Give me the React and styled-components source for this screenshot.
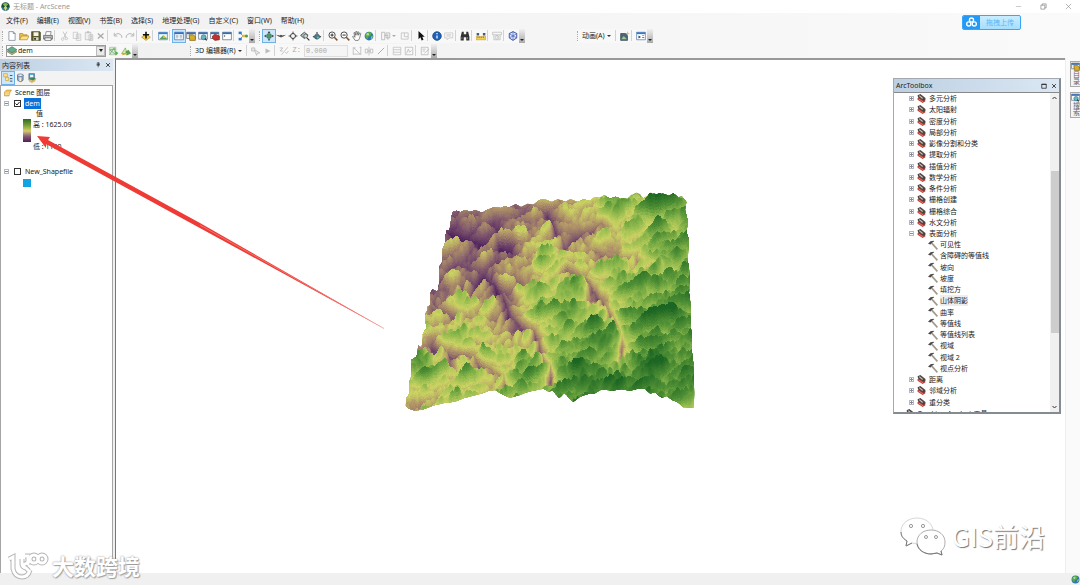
import React, { useState } from 'react';
import styled, { createGlobalStyle, css } from 'styled-components';

const GlobalStyle = createGlobalStyle`
  * {
    box-sizing: border-box;
  }

  body {
    margin: 0;
    background: #fff;
    color: #222;
    font-family: 'Noto Sans', 'Noto Sans CJK SC', sans-serif;
    font-size: 7px;
    line-height: 11px;
  }

  button,
  input,
  select {
    margin: 0;
    padding: 0;
    border: 0;
    background: none;
    color: inherit;
    font: inherit;
  }
`;

/* ---------- icons ---------- */

const shapes = {
  globe: (
    <>
      <circle cx="8" cy="8" r="7" fill="#2c77b4" />
      <path d="M3 4c3-3 7-3 9 0l-2 4-3 1-1 4C2 11 1 7 3 4z" fill="#5cad3c" />
      <path d="M11 9l3-2c0 3-1 5-3 6z" fill="#90cd56" />
      <circle cx="6" cy="5" r="2" fill="#d5efe0" opacity=".7" />
    </>
  ),
  app: (
    <>
      <circle cx="8" cy="8" r="7.5" fill="#184a3c" />
      <path d="M3 4c3-3 7-3 10 0l-3 3H6z" fill="#7cba48" />
      <path d="M8 6l3 4-2 5H7L5 10z" fill="#e2d36a" />
      <path d="M1 9l4 1 2 5c-3 0-5-2-6-6zM15 9l-4 1-2 5c3 0 5-2 6-6z" fill="#2786a8" />
    </>
  ),
  file: <path d="M3 1h7l3 3v11H3zM10 1v3h3" fill="#fff" stroke="#5a6a80" />,
  open: (
    <>
      <path d="M1 14V4h5l1 2h6v3" fill="#e9bd52" stroke="#a97d22" />
      <path d="M1 14l3-6h12l-3 6z" fill="#ffe28a" stroke="#a97d22" />
    </>
  ),
  save: (
    <>
      <path d="M1 1h13l1 1v13H1z" fill="#5c5a28" stroke="#35351a" />
      <path d="M4 2h8v6H4z" fill="#f3f3ea" />
      <path d="M4 10h8v5H4z" fill="#d8d8c8" />
      <path d="M5 11h3v3H5z" fill="#35351a" />
    </>
  ),
  print: (
    <>
      <path d="M4 6l1-5h8l-1 5" fill="#fff" stroke="#555" />
      <path d="M1 7h14v6H1z" fill="#b9bcc0" stroke="#444" />
      <path d="M3 11h10v4H3z" fill="#fff" stroke="#444" />
    </>
  ),
  cut: (
    <path d="M5 1l5 10M11 1L6 11M4 11a2 2 0 102 3 2 2 0 00-2-3zm8 0a2 2 0 10-2 3 2 2 0 002-3z" fill="none" stroke="#bdbdbd" strokeWidth="1.3" />
  ),
  copy: <path d="M2 2h7v10H2zM7 5h7v10H7zM9 8h3M9 10h3M9 12h3" fill="#f6f6f6" stroke="#bbb" />,
  paste: <path d="M2 2h9v12H2zM5 1h3v2H5zM8 6h6v9H8zM10 9h3M10 12h3" fill="#f0f0f0" stroke="#b5b5b5" />,
  remove: <path d="M3 4l9 8M12 4l-9 8" stroke="#a9a9a9" strokeWidth="2" />,
  undo: <path d="M2 3v5h5M2 8c3-5 9-5 12 0v3" fill="none" stroke="#b8b8b8" strokeWidth="1.6" />,
  redo: <path d="M14 3v5H9M14 8C11 3 5 3 2 8v3" fill="none" stroke="#b8b8b8" strokeWidth="1.6" />,
  add: (
    <>
      <path d="M8 5l7 5-7 5-7-5z" fill="#f4cf45" stroke="#b08616" />
      <path d="M8 1v11M3 6h10" stroke="#111" strokeWidth="2.600" />
    </>
  ),
  scene: (
    <>
      <path d="M1 2h14v12H1z" fill="#eef7ff" stroke="#3d6fa8" />
      <path d="M1 2h14v3H1z" fill="#3d7cc4" />
      <path d="M3 12l5-5 6 4v2H3z" fill="#5ea05a" />
      <path d="M9 6l4 5H8z" fill="#e1bb3a" />
    </>
  ),
  toc: (
    <>
      <path d="M1 2h14v12H1z" fill="#fff" stroke="#2b5f9e" />
      <path d="M1 2h14v3H1z" fill="#2c70c4" />
      <path d="M3 7h4M3 9h4M3 11h4M9 7h4M9 9h4M9 11h4" stroke="#7c93ae" />
    </>
  ),
  catalog: (
    <>
      <path d="M1 2h14v10H1z" fill="#f4f4f4" stroke="#456" />
      <path d="M1 2h14v3H1z" fill="#3a6cb0" />
      <path d="M5 6h6l4 3v6H6z" fill="#d9ad27" stroke="#6d5412" />
    </>
  ),
  search: (
    <>
      <path d="M1 2h14v11H1z" fill="#fff" stroke="#456" />
      <path d="M1 2h14v3H1z" fill="#3a6cb0" />
      <circle cx="9" cy="10" r="4" fill="#66b5bd" stroke="#246f98" />
      <path d="M11 12l3 3" stroke="#333" strokeWidth="2" />
    </>
  ),
  toolboxWindow: (
    <>
      <path d="M1 2h13v10H1z" fill="#fff" stroke="#456" />
      <path d="M1 2h13v3H1z" fill="#3a6cb0" />
      <path d="M4 8l4-3 7 3v6l-7 1-4-3z" fill="#c4302b" stroke="#73201d" />
    </>
  ),
  python: (
    <>
      <path d="M1 2h14v12H1z" fill="#fff" stroke="#456" />
      <path d="M1 2h14v3H1z" fill="#3a6cb0" />
      <path d="M3 7l2 1-2 1" fill="none" stroke="#333" />
    </>
  ),
  model: (
    <>
      <path d="M3 3l5 5-5 5M8 8h5" fill="none" stroke="#555" />
      <path d="M1 1h5v4H1z" fill="#2d78c8" />
      <path d="M1 11h5v4H1z" fill="#2d78c8" />
      <path d="M7 6h4v4H7z" fill="#e5bd35" />
      <circle cx="13.5" cy="8" r="2.5" fill="#4ba03f" />
    </>
  ),
  navigate: (
    <>
      <path d="M8 0l2 3H6zM8 16l2-3H6zM0 8l3-2v4zM16 8l-3-2v4z" fill="#333" />
      <circle cx="8" cy="8" r="4" fill="#4f9b5f" stroke="#24627a" />
    </>
  ),
  fly: <path d="M0 6l6 1 2-1 2 1 6-1-5 3H9l-1 2-1-2H5z" fill="#444" />,
  target: (
    <path d="M8 1v4M8 11v4M1 8h4M11 8h4M8 4a4 4 0 100 8 4 4 0 000-8z" fill="none" stroke="#444" strokeWidth="1.6" />
  ),
  zoomTarget: (
    <>
      <path d="M7 2l6 5-6 5-6-5z" fill="#a8bec8" stroke="#444" strokeWidth="1.4" />
      <circle cx="9" cy="8" r="3" fill="#cdd9dd" stroke="#444" />
      <path d="M11 11l4 4" stroke="#333" strokeWidth="2" />
    </>
  ),
  observer: (
    <>
      <path d="M8 1l2 3H6zM1 9l3-2v4zM15 9l-3-2v4z" fill="#333" />
      <circle cx="8" cy="9" r="4" fill="#3b83a9" stroke="#444" />
      <path d="M8 9h3v3H8z" fill="#7ec25d" />
    </>
  ),
  zoomIn: (
    <>
      <circle cx="6.5" cy="6.5" r="5" fill="#fff" stroke="#444" strokeWidth="1.5" />
      <path d="M4 6.500h5M6.500 4v5" stroke="#222" strokeWidth="1.5" />
      <path d="M10 10l5 5" stroke="#7b5433" strokeWidth="2.400" />
    </>
  ),
  zoomOut: (
    <>
      <circle cx="6.5" cy="6.5" r="5" fill="#fff" stroke="#444" strokeWidth="1.5" />
      <path d="M4 6.500h5" stroke="#222" strokeWidth="1.5" />
      <path d="M10 10l5 5" stroke="#7b5433" strokeWidth="2.400" />
    </>
  ),
  hand: (
    <path d="M5 15l-4-6 1-1 3 2-2-7 1-1 2 5V1h2v5l2-5 1 1-1 5 3-4 1 1-2 8-2 3z" fill="#fff" stroke="#444" />
  ),
  grayLayers: <path d="M1 2h5v12H1zM8 3h6v8H8zM6 7h5M11 5v9" fill="none" stroke="#b5b5b5" strokeWidth="1.3" />,
  grayBox: <path d="M2 3h11v10H2zM7 3v6h6" fill="none" stroke="#bbb" strokeWidth="1.2" />,
  pointer: <path d="M4 0v13l3-3 2 5 3-1-2-5h4z" fill="#111" />,
  info: (
    <>
      <circle cx="8" cy="8" r="7" fill="#1f62b8" stroke="#173e75" />
      <path d="M8 7v5M8 3v2" stroke="#fff" strokeWidth="2" />
    </>
  ),
  popup: <path d="M1 3h13v8H8l-3 3v-3H1zM4 6h7M4 8h7" fill="#f7f7f7" stroke="#bbb" />,
  find: (
    <>
      <path d="M3 1h3v4h4V1h3l2 8v6h-5v-5H6v5H1V9z" fill="#333" />
      <path d="M3 10v3M12 10v3" stroke="#aaa" />
    </>
  ),
  measure: (
    <>
      <path d="M0 9h16v5H0z" fill="#f2ce4e" stroke="#c59a3b" />
      <path d="M3 9v2M6 9v2M9 9v2M12 9v2" stroke="#6e5312" />
      <path d="M1 3h4v4H1zM11 3h4v4h-4z" fill="#3c5f80" />
    </>
  ),
  clock: <path d="M1 2h14v4H1zM3 6v8h10V6M8 7a3 3 0 100 6 3 3 0 000-6zM8 8v2h2" fill="none" stroke="#bbb" strokeWidth="1.2" />,
  cube: (
    <>
      <path d="M8 1l6 3v7l-6 4-6-4V4z" fill="#dfe7fb" stroke="#3551a8" strokeWidth="1.5" />
      <path d="M2 4l6 4 6-4M8 1v14M2 11l6-3 6 3" fill="none" stroke="#3551a8" />
    </>
  ),
  layer: (
    <>
      <path d="M8 5l8 4-8 5-8-5z" fill="#b9b06a" stroke="#6a7a62" />
      <path d="M8 1l8 5-8 5-8-5z" fill="#5fae8c" stroke="#45706a" />
    </>
  ),
  tin: (
    <>
      <path d="M1 2h10v12H1z" fill="#d8ecd2" stroke="#9cb698" />
      <path d="M1 14L8 3l3 11L1 6l10-1" fill="none" stroke="#58a058" />
      <path d="M10 8l5 3-4 4z" fill="#5bae4e" />
    </>
  ),
  surface: (
    <>
      <path d="M1 12l6-9 3 9z" fill="#d6e9a6" stroke="#6f9d3b" />
      <path d="M7 9l5-3 4 6-7 3z" fill="#54a04a" />
      <path d="M2 14l8-2" stroke="#d6a730" strokeWidth="2" />
    </>
  ),
  vertex: <path d="M1 3h5v5H1zM6 6l8 5-4 1-1 3-3-7" fill="#e9e9e9" stroke="#aaa" />,
  play: <path d="M4 4l8 4-8 4z" fill="#bbb" />,
  zline: <path d="M1 3h5L2 8h4M4 14L14 2M10 10l2 2 3-4" fill="none" stroke="#aaa" />,
  mesh: <path d="M2 3h4M2 2v12M2 13h12M14 2v12M3 3l10 10M12 2h3" fill="none" stroke="#aaa" />,
  mirror: <path d="M8 1v14M2 5h4v6H2zM10 5h4v6h-4zM6 8h4" fill="none" stroke="#aaa" />,
  line: <path d="M3 13L13 3" stroke="#aaa" strokeWidth="1.5" />,
  grid: <path d="M2 2h12v12H2zM2 6h12M2 10h12" fill="none" stroke="#b5b5b5" />,
  curve: <path d="M2 2h12v12H2zM4 12l3-7 2 5 3-3" fill="none" stroke="#aaa" />,
  edit: <path d="M2 2h11v12H2zM4 5h5M4 8h4M7 12l7-7" fill="none" stroke="#aaa" />,
  movie: (
    <>
      <path d="M1 4h11v11H1z" fill="#4c6678" stroke="#263946" />
      <path d="M2 13l4-5 5 5z" fill="#9ccb87" />
      <path d="M12 0l1 3 3 1-3 1-1 3-1-3-3-1 3-1z" fill="#f0c23c" />
    </>
  ),
  keyframe: (
    <>
      <path d="M1 2h14v12H1z" fill="#fff" stroke="#3869a8" />
      <path d="M1 2h14v3H1z" fill="#3a78c4" />
      <path d="M4 7v5l4-2.500zM10 7h3v1h-3zM10 10h3v1h-3z" fill="#345" />
    </>
  ),
  listOrder: (
    <>
      <path d="M1 1h6v5H1zM4 7h5v5H4z" fill="#ffe394" stroke="#c79a3a" />
      <path d="M11 4h4M11 9h4M11 13h4" stroke="#356" strokeWidth="1.5" />
    </>
  ),
  listSource: (
    <>
      <path d="M4 11l5 4 5-4-5-2z" fill="#e3bd4b" />
      <path d="M4 3v8c0 3 9 3 9 0V3z" fill="#8ea9cc" stroke="#44597a" />
      <ellipse cx="8.5" cy="3.500" rx="4.500" ry="2" fill="#f1f4f8" stroke="#44597a" />
      <path d="M7 7h3v6H7z" fill="#f4f0d0" />
    </>
  ),
  listVisible: (
    <>
      <path d="M3 1h9v10H3z" fill="#4f9fc0" stroke="#3f6b95" />
      <path d="M5 3h5v4H5z" fill="#f3f7fb" />
      <path d="M1 8l5 4 9-4-2 5-5 3-4-2z" fill="#d9b765" />
      <path d="M4 8l5 4 5-3-4-2z" fill="#39845c" />
    </>
  ),
  sceneLayers: (
    <>
      <path d="M1 6l4-4h10l-3 5-2 7H1z" fill="#f2c55c" stroke="#b3822a" />
      <path d="M2 8h9M2 11h9" stroke="#fff1c0" />
    </>
  ),
  toolset: (
    <>
      <path d="M1 7l4-1 9 4 1 3-5 3-9-6z" fill="#c23a31" />
      <path d="M1 2l5-2 9 7v4l-4 1-9-6z" fill="#4d4542" />
      <path d="M4 3l6 5" stroke="#cfc4bd" strokeWidth="2" />
      <path d="M3 9l8 5" stroke="#e8a79e" strokeWidth="1" />
    </>
  ),
  hammer: (
    <>
      <path d="M6 5l9 10" stroke="#a29a8b" strokeWidth="2.600" />
      <path d="M0 6l4-4 5-1 1 1-3 2-3 3z" fill="#4b4b4b" />
    </>
  ),
  pin: <path d="M6 2h5v6H6zM4 8h9M8.500 8v6M9.500 2v6" fill="none" stroke="#222" strokeWidth="1.6" />,
  close: <path d="M3 3l10 10M13 3L3 13" stroke="#222" strokeWidth="2.200" />,
  thinClose: <path d="M2 2l12 12M14 2L2 14" stroke="#777" strokeWidth="1.2" />,
  minimize: <path d="M2 8h12" stroke="#aaa" strokeWidth="1.4" />,
  restore: <path d="M2 5h9v9H2zM5 5V2h9v9h-3" fill="none" stroke="#777" strokeWidth="1.4" />,
  maximize: <path d="M2 3h12v11H2zM2 4h12" fill="none" stroke="#222" strokeWidth="2" />,
  cloud: (
    <g fill="none" stroke="#fff" strokeWidth="2">
      <circle cx="8" cy="4.500" r="3" />
      <circle cx="4" cy="10" r="3" />
      <circle cx="12" cy="10" r="3" />
    </g>
  ),
};

const Icon = ({ name, size = 10 }) => (
  <svg width={size} height={size} viewBox="0 0 16 16" aria-hidden="true">
    {shapes[name]}
  </svg>
);

/* ---------- frame ---------- */

const Frame = styled.div`
  position: relative;
  display: flex;
  flex-direction: column;
  min-height: 100vh;
  overflow: hidden;
`;

const TitleBar = styled.header`
  display: flex;
  align-items: center;
  gap: 3px;
  height: 13px;
  padding: 0 8px 0 1px;
  color: #999;
`;

const WindowButtons = styled.div`
  display: flex;
  gap: 18px;
  margin-left: auto;
`;

const PlainButton = styled.button`
  display: flex;
  align-items: center;
  justify-content: center;
`;

const Chrome = styled.div`
  height: 45px;
  background: linear-gradient(90deg, #f0f0f0, #f5f5f5 50%, #fafafa);
`;

const MenuBar = styled.nav`
  display: flex;
  gap: 9px;
  height: 15px;
  padding: 2px 6px;
`;

const ToolRow = styled.div`
  display: flex;
  align-items: center;
  height: 15px;
  padding-left: 2px;
`;

const ToolGroup = styled.div`
  display: flex;
  align-items: center;
  height: 14px;
  margin-right: ${({ $after = 4 }) => $after}px;
  background: #f8f8f8;
`;

const Grip = styled.i`
  width: 4px;
  height: 10px;
  border-left: 1px dotted #aaa;
`;

const Divider = styled.i`
  width: ${({ $narrow }) => ($narrow ? 4 : 5)}px;
  height: 11px;
  border-left: 1px solid #d2d2d2;
`;

const ToolButton = styled.button`
  display: flex;
  align-items: center;
  justify-content: center;
  width: 12px;
  height: 12px;
  ${({ $active }) =>
    $active &&
    css`
      background: #cde6f9;
      outline: 1px solid #6fb1e4;
    `}
`;

const TextButton = styled.button`
  display: flex;
  align-items: center;
  gap: 2px;
  padding: 0 4px 0 1px;
  white-space: nowrap;

  &::after {
    content: '';
    border: 2px solid transparent;
    border-top-color: #333;
    border-bottom: 0;
  }
`;

const Caret = styled.button`
  display: flex;
  align-items: center;
  width: 7px;
  height: 12px;

  &::after {
    content: '';
    border: 2px solid transparent;
    border-top-color: #aaa;
    border-bottom: 0;
  }
`;

const Overflow = styled.button`
  align-self: stretch;
  width: 6px;
  background: linear-gradient(#f0f0f0, #a9a9a9);

  &::after {
    content: '';
    display: block;
    width: 0;
    margin: 8px 1px 0;
    border: 2px solid transparent;
    border-top-color: #222;
    border-bottom: 0;
  }
`;

const LayerPicker = styled.label`
  display: flex;
  align-items: center;
  width: 100px;
  height: 12px;
  margin-right: 2px;
  border: 1px solid #999;
  background: #fff;

  select {
    flex: 1;
    height: 10px;
    padding-left: 1px;
    appearance: none;
    line-height: 10px;
    background: #fff;
  }
`;

const PickerArrow = styled.i`
  display: flex;
  align-items: center;
  justify-content: center;
  width: 9px;
  height: 10px;
  background: #e9e9e9;
  border: 1px solid #bbb;

  &::after {
    content: '';
    border: 2px solid transparent;
    border-top: 3px solid #222;
    border-bottom: 0;
  }
`;

const HeightField = styled.label`
  display: flex;
  align-items: center;
  gap: 3px;
  padding: 0 3px;
  color: #aaa;
  font-family: 'Liberation Mono', monospace;

  input {
    width: 44px;
    height: 12px;
    padding-left: 1px;
    border: 1px solid #ddd;
    background: #f5f5f5;
  }
`;

const UploadButton = styled.button`
  position: absolute;
  top: 15px;
  right: 59px;
  display: flex;
  align-items: center;
  width: 59px;
  height: 15px;
  overflow: hidden;
  border: 1px solid #39a5f7;
  border-radius: 2px;
  background: linear-gradient(#c9edff, #a4deff);
  color: #5bb5f4;

  svg {
    width: 17px;
    height: 15px;
    padding: 2px;
    background: #2499f5;
  }

  span {
    flex: 1;
  }
`;

const Workspace = styled.div`
  flex: 1;
  display: flex;
  min-height: 0;
  background: #f0f0f0;
`;

const Contents = styled.aside`
  display: flex;
  flex-direction: column;
  width: 113px;
  padding-top: 1px;
`;

const PanelHeader = styled.div`
  display: flex;
  align-items: center;
  gap: 4px;
  height: 12px;
  padding: 0 2px;
  background: linear-gradient(90deg, #bdd0e3, #dbe7f3);

  h2 {
    flex: 1;
    margin: 0;
    font-size: inherit;
    font-weight: 400;
  }
`;

const PanelTools = styled.div`
  display: flex;
  align-items: center;
  height: 14px;
  padding-left: 2px;
  background: #f3f3f3;
`;

const Layers = styled.div`
  flex: 1;
  padding: 1px 3px;
  border: 1px solid #a5a5a5;
  border-width: 1px 1px 0;
  background: #fff;
`;

const LayerRow = styled.div`
  display: flex;
  align-items: center;
  gap: 4px;
  height: 11px;

  & > svg {
    margin-right: -1px;
  }
`;

const Expander = styled.button`
  width: 5px;
  height: 5px;
  border: 1px solid #b3b9c2;
  background:
    linear-gradient(#889, #889) center / 3px 1px no-repeat,
    ${({ $open }) => ($open ? 'linear-gradient(#fff, #fff)' : 'linear-gradient(#889, #889) center / 1px 3px no-repeat')};
`;

const LayerToggle = styled.label`
  display: flex;
  align-items: center;
  gap: 3px;
  margin-left: 1px;

  i {
    position: relative;
    display: flex;
  }

  i svg {
    position: absolute;
    inset: 0;
    pointer-events: none;
  }

  input {
    width: 7px;
    height: 7px;
    appearance: none;
    border: 1px solid #333;
    background: #fff;
  }

  span {
    padding: 0 1px;
    ${({ $selected }) => $selected && 'background: #0a72d8; color: #fff;'}
  }
`;

const Legend = styled.div`
  display: grid;
  grid-template-columns: 8px auto;
  column-gap: 2px;
  width: max-content;
  margin: 0 0 14px 19px;

  b {
    grid-column: 2;
    padding-left: 3px;
    font-weight: 400;
    line-height: 10px;
  }

  i {
    grid-row: 2 / 4;
    grid-column: 1;
    height: 23px;
    background: linear-gradient(#286a25, #83a33b 30%, #d5cd6b 52%, #8a5a75 75%, #4c2058);
  }

  span:last-child {
    padding-top: 11px;
  }
`;

const Swatch = styled.div`
  width: 8px;
  height: 8px;
  margin: 2px 0 0 19px;
  background: #12a3e2;
`;

const SceneView = styled.main`
  position: relative;
  flex: 1;
  margin-left: 2px;
  border-top: 2px solid #999;
  border-left: 1px solid #777;
  background: #fff;
`;

const Relief = styled.svg`
  position: absolute;
  top: 120px;
  left: 279px;
`;

const Rail = styled.div`
  display: flex;
  flex-direction: column;
  align-items: flex-end;
  gap: 5px;
  width: 15px;
  padding-top: 3px;
  background: #fafafa;
  border-left: 1px solid #eee;
`;

const RailTab = styled.button`
  display: flex;
  flex-direction: column;
  align-items: center;
  width: 10px;
  height: 26px;
  border: 1px solid #aaa;
  border-right: 0;
  background: #f4f4f4;
  color: #666;
  line-height: 8px;

  span {
    writing-mode: vertical-rl;
  }
`;

const StatusBar = styled.footer`
  display: flex;
  align-items: center;
  justify-content: flex-end;
  height: 12px;
  background: #f0f0f0;
`;

const Toolbox = styled.section`
  position: absolute;
  top: 78px;
  right: 19px;
  display: flex;
  flex-direction: column;
  width: 168px;
  height: 336px;
  border: 1px solid #a3a9b0;
  border-right: 2px solid #858b93;
  border-bottom: 2px solid #858b93;
  background: #fff;

  ${PanelHeader} {
    height: 13px;
  }
`;

const ToolboxBody = styled.div`
  flex: 1;
  display: flex;
  min-height: 0;
  border-top: 1px solid #888;
`;

const TreeClip = styled.div`
  flex: 1;
  overflow: hidden;
`;

const Tree = styled.ul`
  display: grid;
  grid-auto-rows: 1fr;
  height: 326px;
  margin: 0;
  padding: 0;
  list-style: none;
`;

const TreeItem = styled.li`
  display: flex;
  align-items: center;
  gap: ${({ $level }) => ($level === 2 ? 2 : 3)}px;
  padding-left: ${({ $level }) => [12, 15, 34][$level]}px;
  white-space: nowrap;

  span {
    ${({ $selected }) => $selected && 'background: #eee;'}
  }
`;

const ScrollTrack = styled.div`
  display: flex;
  flex-direction: column;
  align-items: center;
  justify-content: space-between;
  width: 9px;
  background: linear-gradient(#cdcdcd, #cdcdcd) center 78px / 8px 162px no-repeat, #f0f0f0;

  button {
    width: 9px;
    height: 10px;
  }

  svg {
    display: block;
    margin: auto;
  }
`;

const Annotation = styled.svg`
  position: absolute;
  top: 130px;
  left: 30px;
  pointer-events: none;
`;

const Watermark = styled.div`
  position: absolute;
  display: flex;
  align-items: center;
  gap: ${({ $gap }) => $gap}px;
  color: #fff;
  white-space: nowrap;
  pointer-events: none;
`;

const ChannelMark = styled(Watermark)`
  right: 35px;
  bottom: 29px;
  font-family: 'Noto Sans CJK SC', sans-serif;
  font-size: 26px;
  line-height: 38px;
  text-shadow: 1px 1px 1px #777;
`;

const SiteMark = styled(Watermark)`
  left: 8px;
  bottom: 4px;
  font-size: 22px;
  font-weight: 700;
  line-height: 30px;
  text-shadow: 0 0 2px #888, 1px 1px 1px #aaa;
`;

/* ---------- relief model ---------- */

// x, y, relative elevation
const samples = [
  [200, 110, 0.28], [300, 140, 0.22], [400, 100, 0.38], [470, 110, 0.44], [560, 90, 0.58],
  [540, 160, 0.44], [650, 70, 0.68], [720, 60, 0.72], [850, 60, 0.84], [800, 130, 0.8],
  [700, 120, 0.67], [640, 170, 0.58], [160, 160, 0.24], [240, 180, 0.28], [330, 190, 0.2],
  [180, 230, 0.3], [280, 270, 0.24], [210, 270, 0.28], [140, 310, 0.24], [340, 230, 0.28],
  [400, 205, 0.55], [450, 180, 0.7], [510, 190, 0.58], [600, 220, 0.62], [690, 240, 0.7],
  [850, 200, 0.83], [800, 240, 0.74], [450, 230, 0.7], [520, 262, 0.6], [390, 260, 0.42],
  [460, 300, 0.74], [300, 325, 0.3], [330, 380, 0.38], [240, 340, 0.65], [180, 330, 0.58],
  [130, 370, 0.5], [200, 380, 0.64], [400, 340, 0.64], [570, 300, 0.6], [610, 340, 0.62],
  [700, 300, 0.87], [850, 300, 0.92], [600, 265, 0.66], [655, 400, 0.7], [430, 460, 0.54],
  [370, 425, 0.5], [430, 380, 0.75], [520, 400, 0.86], [600, 420, 0.87], [740, 400, 0.92],
  [860, 400, 0.94], [120, 420, 0.55], [110, 475, 0.44], [200, 450, 0.66], [280, 440, 0.7],
  [340, 450, 0.6], [150, 520, 0.46], [250, 520, 0.56], [390, 500, 0.82], [500, 500, 0.92],
  [600, 500, 0.96], [680, 490, 0.78], [780, 480, 0.96], [860, 500, 0.96], [90, 560, 0.8],
  [180, 570, 0.7], [275, 560, 0.58], [380, 570, 0.88], [460, 550, 0.76], [560, 570, 0.98],
  [640, 590, 1.04], [740, 560, 1.02], [850, 570, 1.02], [60, 650, 0.5], [150, 630, 0.6],
  [240, 610, 0.7], [325, 600, 0.62], [340, 645, 0.74], [480, 620, 0.98], [600, 620, 1.04],
  [720, 620, 1.06], [880, 660, 0.8],
];

// depth, then the points of the stream
const streams = [
  [0.4, [240, 325], [262, 292], [300, 325], [325, 360], [340, 400], [375, 435], [412, 450], [430, 485]],
  [0.4, [515, 262], [560, 292], [590, 318], [622, 360], [655, 415], [680, 465], [678, 515]],
  [0.42, [430, 485], [440, 525], [465, 560], [468, 595]],
  [0.22, [165, 150], [230, 172], [285, 188], [340, 208]],
  [0.2, [320, 205], [300, 260], [285, 300]],
  [0.3, [110, 495], [150, 520], [215, 520], [270, 560], [325, 590], [328, 620]],
  [0.28, [455, 90], [480, 140], [510, 188]],
  [0.24, [510, 188], [560, 150], [620, 120]],
  [0.28, [600, 205], [640, 218], [720, 226], [800, 256]],
  [0.2, [110, 375], [150, 385], [215, 400]],
];

const ramp = [
  [0, [80, 36, 94]],
  [0.2, [122, 80, 108]],
  [0.42, [176, 148, 104]],
  [0.58, [202, 210, 98]],
  [0.75, [138, 182, 74]],
  [0.9, [78, 142, 52]],
  [1.15, [26, 100, 34]],
];

const colorAt = (value) => {
  const v = Math.max(0, Math.min(1.14, value));
  const i = ramp.findIndex(([stop]) => stop > v);
  const [a, from] = ramp[i - 1];
  const [b, to] = ramp[i];
  const t = (v - a) / (b - a);
  return `rgb(${from.map((c, k) => Math.round(c + (to[k] - c) * t)).join(',')})`;
};

const regional = (x, y) => {
  let total = 0;
  let weight = 0;
  samples.forEach(([sx, sy, value]) => {
    const d = (x - sx) ** 2 + (y - sy) ** 2 + 500;
    const w = 1 / (d * Math.sqrt(d));
    total += value * w;
    weight += w;
  });
  return total / weight;
};

const segmentDistance = (x, y, [ax, ay], [bx, by]) => {
  const dx = bx - ax;
  const dy = by - ay;
  const t = Math.max(0, Math.min(1, ((x - ax) * dx + (y - ay) * dy) / (dx * dx + dy * dy)));
  return (x - ax - t * dx) ** 2 + (y - ay - t * dy) ** 2;
};

const carve = (x, y) => {
  let depth = 0;
  streams.forEach(([amount, ...points]) => {
    let nearest = Infinity;
    for (let i = 1; i < points.length; i += 1) {
      nearest = Math.min(nearest, segmentDistance(x, y, points[i - 1], points[i]));
    }
    depth = Math.max(depth, amount * Math.exp(-Math.sqrt(nearest) / 13));
  });
  return depth;
};

const hash = (x, y) => {
  const s = Math.sin(x * 127.1 + y * 311.7) * 43758.5453;
  return (s - Math.floor(s)) * Math.PI * 2;
};

const fade = (t) => t * t * t * (t * (t * 6 - 15) + 10);

const gradientNoise = (x, y) => {
  const ix = Math.floor(x);
  const iy = Math.floor(y);
  const fx = x - ix;
  const fy = y - iy;
  const corner = (cx, cy) => {
    const a = hash(ix + cx, iy + cy);
    return Math.cos(a) * (fx - cx) + Math.sin(a) * (fy - cy);
  };
  const u = fade(fx);
  const top = corner(0, 0) + (corner(1, 0) - corner(0, 0)) * u;
  const bottom = corner(0, 1) + (corner(1, 1) - corner(0, 1)) * u;
  return top + (bottom - top) * fade(fy);
};

const hills = (x, y) => {
  const slant = y + x * 0.3;
  let total = 0;
  total += Math.abs(gradientNoise(x / 120 + 3, slant / 42)) * 1.1;
  total += Math.abs(gradientNoise(x / 58 + 11, slant / 30 + 7)) * 0.75;
  total += Math.abs(gradientNoise(x / 25 + 5, y / 26 + 13)) * 0.4;
  total += Math.abs(gradientNoise(x / 12 + 9, y / 20 + 3)) * 0.14;
  return total;
};

const cellWidth = 3;
const rowStep = 2;

// Rows run from the far edge to the near edge, so nearer slopes cover the ones behind.
const buildSurface = () => {
  const rows = [];
  for (let y = 36; y < 730; y += rowStep) {
    const strips = new Map();
    for (let x = 30; x < 900; x += cellWidth) {
      const cut = carve(x, y);
      const h = hills(x, y);
      const value = regional(x, y - 6) + (h - 0.48) * 0.55 - cut;
      const level = Math.round(value * 50);
      const top = Math.round(y - (h - 0.48) * 66 + cut * 26);
      const strip = `M${x} ${top}h${cellWidth}v24h-${cellWidth}z`;
      strips.set(level, (strips.get(level) || '') + strip);
    }
    rows.push({ y, strips: [...strips] });
  }
  return rows;
};

const surface = buildSurface();

const outline =
  'M172 97L185 92 196 97 210 91 228 95 240 90 262 98 275 90 298 82 318 84 332 78 340 84 362 73 378 82 398 71 415 75 430 62 440 57 455 60 470 66 490 58 512 65 526 57 548 66 566 58 585 63 598 51 615 53 628 46 645 56 662 50 680 56 698 57 710 44 724 37 736 42 744 55 756 48 766 37 784 43 800 39 822 47 835 40 850 52 861 48 874 66 870 90 878 120 875 160 882 178 878 240 884 280 882 340 888 380 886 430 891 470 890 510 895 550 896 600 898 640 896 683 864 682 850 668 832 660 815 648 800 653 782 638 765 640 750 627 728 626 705 632 680 628 650 632 620 628 600 640 575 643 555 650 535 665 522 655 515 645 508 640 492 655 480 640 472 630 462 635 445 626 425 630 400 635 375 645 345 653 320 642 300 630 282 632 258 641 230 648 205 655 180 665 150 668 118 676 85 688 60 692 42 686 32 678 34 655 44 640 42 610 48 590 48 540 65 530 70 496 80 504 84 460 94 445 90 402 98 390 98 380 106 376 106 340 112 328 128 336 134 300 132 260 142 245 142 210 150 190 154 150 163 153Z';

const Terrain = () => (
  <Relief width="310" height="240" viewBox="0 0 930 720" role="img" aria-label="dem">
    <defs>
      <clipPath id="extent">
        <path d={outline} />
      </clipPath>
      <linearGradient id="base">
        <stop offset="0" stopColor="#7a4f66" />
        <stop offset=".4" stopColor="#a08a60" />
        <stop offset=".65" stopColor="#b4bd58" />
        <stop offset="1" stopColor="#6a9c3e" />
      </linearGradient>
    </defs>
    <g clipPath="url(#extent)">
      <path d={outline} fill="url(#base)" />
      {surface.map(({ y, strips }) => (
        <g key={y} shapeRendering="crispEdges">
          {strips.map(([level, d]) => (
            <path key={level} d={d} fill={colorAt(level / 50)} />
          ))}
        </g>
      ))}
    </g>
  </Relief>
);

/* ---------- data ---------- */

const menus = ['文件(F)', '编辑(E)', '视图(V)', '书签(B)', '选择(S)', '地理处理(G)', '自定义(C)', '窗口(W)', '帮助(H)'];

const standardTools = [
  'file', 'open', 'save', 'print', '|', 'cut', 'copy', 'paste', 'remove', '|', 'undo', 'redo', '.',
  'add', '|', 'scene', '.', 'toc', 'catalog', 'search', 'toolboxWindow', 'python', '.', 'model',
];

const sceneTools = [
  'navigate', 'fly', 'target', 'zoomTarget', 'observer', '.', 'zoomIn', 'zoomOut', 'hand', 'globe',
  '|', 'grayLayers', 'v', 'grayBox', '.', 'pointer', '.', 'info', 'popup', '.', 'find', '.',
  'measure', '.', 'clock', '.', 'cube',
];

const toolsets = [
  '多元分析', '太阳辐射', '密度分析', '局部分析', '影像分割和分类', '提取分析', '插值分析',
  '数学分析', '条件分析', '栅格创建', '栅格综合', '水文分析', '表面分析',
];

const surfaceTools = [
  '可见性', '含障碍的等值线', '坡向', '坡度', '填挖方', '山体阴影', '曲率', '等值线',
  '等值线列表', '视域', '视域 2', '视点分析',
];

const Tools = ({ items }) =>
  items.map((name, i) => {
    const key = `${name}-${i}`;
    if (name === '|' || name === '.') return <Divider key={key} $narrow={name === '.'} />;
    if (name === 'v') return <Caret key={key} type="button" aria-label="more" />;
    return (
      <ToolButton key={key} type="button" aria-label={name} $active={name === 'toc' || name === 'navigate'}>
        <Icon name={name} />
      </ToolButton>
    );
  });

const ToolsetItem = ({ name, open }) => (
  <TreeItem $level={1}>
    <Expander type="button" aria-label={name} $open={open} />
    <Icon name="toolset" size={9} />
    <span>{name}</span>
  </TreeItem>
);

const LayerItem = ({ name, checked, selected, onToggle }) => (
  <LayerRow>
    <Expander type="button" aria-label={name} $open />
    <LayerToggle $selected={selected}>
      <i>
        <input type="checkbox" checked={checked} onChange={onToggle} />
        {checked && (
          <svg width="7" height="7" viewBox="0 0 7 7">
            <path d="M1.500 3.500l1.500 1.500 2.500-3" fill="none" stroke="#222" />
          </svg>
        )}
      </i>
      <span>{name}</span>
    </LayerToggle>
  </LayerRow>
);

const App = () => {
  const [visible, setVisible] = useState({ dem: true, shape: false });

  const toggle = (layer) => setVisible({ ...visible, [layer]: !visible[layer] });

  return (
    <Frame>
      <GlobalStyle />
      <TitleBar>
        <Icon name="app" size={9} />
        <span>无标题 - ArcScene</span>
        <WindowButtons>
          <PlainButton type="button" aria-label="minimize"><Icon name="minimize" size={7} /></PlainButton>
          <PlainButton type="button" aria-label="restore"><Icon name="restore" size={7} /></PlainButton>
          <PlainButton type="button" aria-label="close"><Icon name="thinClose" size={7} /></PlainButton>
        </WindowButtons>
      </TitleBar>

      <Chrome>
        <MenuBar>
          {menus.map((menu) => (
            <PlainButton key={menu} type="button">{menu}</PlainButton>
          ))}
        </MenuBar>
        <ToolRow>
          <ToolGroup>
            <Grip />
            <Tools items={standardTools} />
            <Overflow type="button" aria-label="options" />
          </ToolGroup>
          <ToolGroup $after={52}>
            <Grip />
            <Tools items={sceneTools} />
            <Overflow type="button" aria-label="options" />
          </ToolGroup>
          <ToolGroup>
            <Grip />
            <TextButton type="button">动画(A)</TextButton>
            <Tools items={['.', 'movie', '.', 'keyframe']} />
            <Overflow type="button" aria-label="options" />
          </ToolGroup>
        </ToolRow>
        <ToolRow>
          <ToolGroup $after={52}>
            <Grip />
            <LayerPicker>
              <Icon name="layer" />
              <select aria-label="layer" defaultValue="dem">
                <option>dem</option>
              </select>
              <PickerArrow />
            </LayerPicker>
            <Tools items={['tin', 'surface']} />
            <Overflow type="button" aria-label="options" />
          </ToolGroup>
          <ToolGroup>
            <Grip />
            <TextButton type="button">3D 编辑器(R)</TextButton>
            <Tools items={['.', 'vertex', 'play', '.', 'zline']} />
            <HeightField>
              Z:
              <input type="text" defaultValue="0.000" />
            </HeightField>
            <Tools items={['mesh', 'mirror', 'line', '.', 'grid', 'curve', '.', 'edit']} />
            <Overflow type="button" aria-label="options" />
          </ToolGroup>
        </ToolRow>
      </Chrome>

      <UploadButton type="button">
        <Icon name="cloud" size={16} />
        <span>拖拽上传</span>
      </UploadButton>

      <Workspace>
        <Contents>
          <PanelHeader>
            <h2>内容列表</h2>
            <PlainButton type="button" aria-label="pin"><Icon name="pin" size={6} /></PlainButton>
            <PlainButton type="button" aria-label="close"><Icon name="close" size={6} /></PlainButton>
          </PanelHeader>
          <PanelTools>
            <ToolButton type="button" aria-label="order" $active><Icon name="listOrder" /></ToolButton>
            <ToolButton type="button" aria-label="source"><Icon name="listSource" /></ToolButton>
            <ToolButton type="button" aria-label="visibility"><Icon name="listVisible" /></ToolButton>
          </PanelTools>
          <Layers>
            <LayerRow>
              <Icon name="sceneLayers" size={8} />
              <span>Scene 图层</span>
            </LayerRow>
            <LayerItem name="dem" checked={visible.dem} selected onToggle={() => toggle('dem')} />
            <Legend>
              <b>值</b>
              <i />
              <span>高 : 1625.09</span>
              <span>低 : 1100</span>
            </Legend>
            <LayerItem name="New_Shapefile" checked={visible.shape} onToggle={() => toggle('shape')} />
            <Swatch />
          </Layers>
        </Contents>
        <SceneView>
          <Terrain />
        </SceneView>
        <Rail>
          <RailTab type="button"><Icon name="catalog" size={9} /><span>目录</span></RailTab>
          <RailTab type="button"><Icon name="search" size={9} /><span>搜索</span></RailTab>
        </Rail>
      </Workspace>

      <StatusBar>
        <Icon name="globe" size={9} />
      </StatusBar>

      <Toolbox>
        <PanelHeader>
          <h2>ArcToolbox</h2>
          <PlainButton type="button" aria-label="maximize"><Icon name="maximize" size={6} /></PlainButton>
          <PlainButton type="button" aria-label="close"><Icon name="close" size={6} /></PlainButton>
        </PanelHeader>
        <ToolboxBody>
          <TreeClip>
            <Tree>
              {toolsets.map((name) => (
                <ToolsetItem key={name} name={name} open={name === '表面分析'} />
              ))}
              {surfaceTools.map((name) => (
                <TreeItem key={name} $level={2} $selected={name === '山体阴影'}>
                  <Icon name="hammer" size={10} />
                  <span>{name}</span>
                </TreeItem>
              ))}
              {['距离', '邻域分析', '重分类'].map((name) => (
                <ToolsetItem key={name} name={name} />
              ))}
              <TreeItem $level={0}>
                <Icon name="toolset" size={9} />
                <span>Tracking Analyst 工具</span>
              </TreeItem>
            </Tree>
          </TreeClip>
          <ScrollTrack>
            <button type="button" aria-label="up">
              <svg width="5" height="4" viewBox="0 0 10 8"><path d="M1 6l4-4 4 4" fill="none" stroke="#333" strokeWidth="2" /></svg>
            </button>
            <button type="button" aria-label="down">
              <svg width="5" height="4" viewBox="0 0 10 8"><path d="M1 2l4 4 4-4" fill="none" stroke="#333" strokeWidth="2" /></svg>
            </button>
          </ScrollTrack>
        </ToolboxBody>
      </Toolbox>

      <Annotation width="360" height="205" viewBox="30 130 360 205" aria-hidden="true">
        <path d="M37 136L50 137 48 140 200 223 384 328.500 198 227 46 144 46 148Z" fill="#ee3b35" />
        <path d="M200 225L384 328.500" stroke="#f08a86" strokeWidth=".7" />
      </Annotation>

      <ChannelMark $gap={6}>
        <svg width="46" height="40" viewBox="0 0 46 40" aria-hidden="true">
          <g fill="#fff">
            <path d="M17 2C8 2 1 8 1 15c0 5 3 8 6 10l-1 5 6-3c14 3 21-5 21-12C33 8 26 2 17 2z" stroke="#ccc" strokeWidth=".8" />
            <path d="M31 14c-8 0-14 5-14 12s7 12 14 12l6-1 5 2-1-4c3-2 4-5 4-9 0-7-6-12-14-12z" stroke="#999" strokeWidth=".8" />
            <path d="M1 16c0 5 3 7 6 9l-1 5 6-3M17 28c1 6 7 10 14 10l6-1 5 2-1-4" fill="none" stroke="#777" />
            <circle cx="11" cy="10" r="1.600" stroke="#999" />
            <circle cx="23" cy="10" r="1.600" stroke="#999" />
            <circle cx="26" cy="21" r="1.500" stroke="#999" />
            <circle cx="36" cy="21" r="1.500" stroke="#999" />
          </g>
        </svg>
        <span>GIS前沿</span>
      </ChannelMark>

      <SiteMark $gap={3}>
        <svg width="41" height="30" viewBox="0 0 41 30" aria-hidden="true">
          {['#b5b5b5', '#fff'].map((color, i) => (
            <g key={color} fill="none" stroke={color} strokeWidth={5 - i * 2}>
              <path d="M1 8l4-2v12q2 8 9 8 6 0 8-7M14 8v5q0 3 4 4l3 3M14 15l8-5M17 5h3v9" />
              <circle cx="26" cy="8" r="4" />
              <circle cx="34" cy="8" r="4" />
            </g>
          ))}
        </svg>
        <span>大数跨境</span>
      </SiteMark>
    </Frame>
  );
};

export default App;
